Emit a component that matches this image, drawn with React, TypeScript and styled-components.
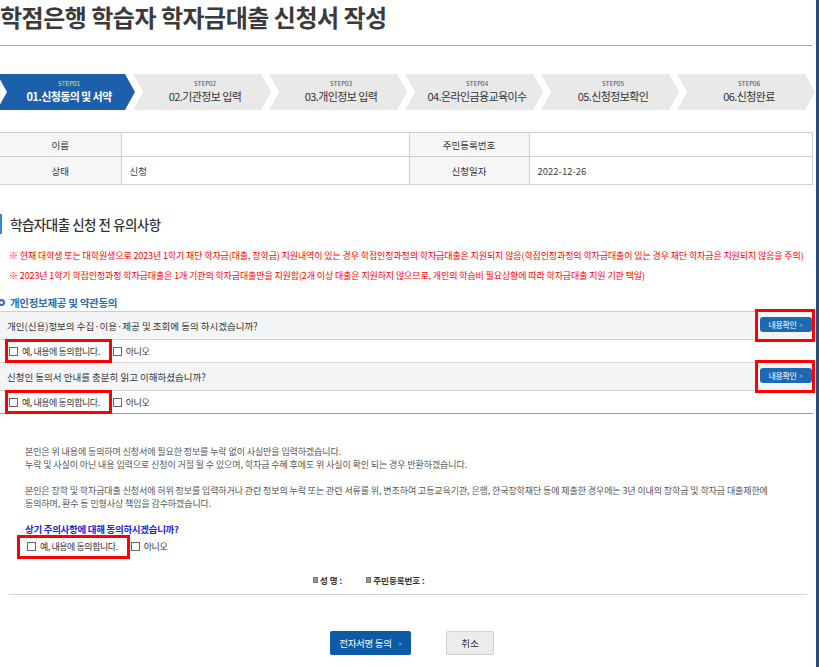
import React from 'react';
import styled, { createGlobalStyle } from 'styled-components';

const GlobalStyle = createGlobalStyle`
  html, body {
    margin: 0;
    padding: 0;
    background: #fff;
    overflow: hidden;
  }
  body {
    font-family: "Noto Sans CJK KR", "Noto Sans", sans-serif;
    color: #333;
  }
  * { box-sizing: border-box; }
`;

const steps = [
  { no: 'STEP01', label: '01.신청동의 및 서약' },
  { no: 'STEP02', label: '02.기관정보 입력' },
  { no: 'STEP03', label: '03.개인정보 입력' },
  { no: 'STEP04', label: '04.온라인금융교육이수' },
  { no: 'STEP05', label: '05.신청정보확인' },
  { no: 'STEP06', label: '06.신청완료' },
];

const CheckItem = ({ text }: { text: string }) => (
  <CheckLabel>
    <Box />
    <span>{text}</span>
  </CheckLabel>
);

export default function App() {
  return (
    <Page>
      <GlobalStyle />
      <Content>
        <Title>학점은행 학습자 학자금대출 신청서 작성</Title>
        <Divider />

        <Steps>
          {steps.map((s, i) => (
            <Step key={s.no} $active={i === 0}>
              <StepNo $active={i === 0}>{s.no}</StepNo>
              <StepLabel $active={i === 0}>{s.label}</StepLabel>
            </Step>
          ))}
        </Steps>

        <InfoTable>
          <tbody>
            <tr>
              <Th>이름</Th>
              <Td></Td>
              <Th>주민등록번호</Th>
              <Td></Td>
            </tr>
            <tr>
              <Th $tall>상태</Th>
              <Td $tall>신청</Td>
              <Th $tall>신청일자</Th>
              <Td $tall>2022-12-26</Td>
            </tr>
          </tbody>
        </InfoTable>

        <SectionTitle>학습자대출 신청 전 유의사항</SectionTitle>
        <Notice>
          ※ 현재 대학생 또는 대학원생으로 2023년 1학기 재단 학자금(대출, 장학금) 지원내역이 있는 경우 학점인정과정의 학자금대출은 지원되지 않음(학점인정과정의 학자금대출이 있는 경우 재단 학자금은 지원되지 않음을 주의)
        </Notice>
        <Notice>
          ※ 2023년 1학기 학점인정과정 학자금대출은 1개 기관의 학자금대출만을 지원함(2개 이상 대출은 지원하지 않으므로, 개인의 학습비 필요상황에 따라 학자금대출 지원 기관 택일)
        </Notice>

        <SubTitle>
          <Ring />
          개인정보제공 및 약관동의
        </SubTitle>

        <AgreeBlock>
          <QuestionRow>
            <span>개인(신용)정보의 수집·이용·제공 및 조회에 동의 하시겠습니까?</span>
            <ButtonMark>
              <DetailButton>
                내용확인 <Chevron>&gt;</Chevron>
              </DetailButton>
            </ButtonMark>
          </QuestionRow>
          <AnswerRow>
            <Mark>
              <CheckItem text="예, 내용에 동의합니다." />
            </Mark>
            <CheckItem text="아니오" />
          </AnswerRow>
          <QuestionRow>
            <span>신청인 동의서 안내를 충분히 읽고 이해하셨습니까?</span>
            <ButtonMark>
              <DetailButton>
                내용확인 <Chevron>&gt;</Chevron>
              </DetailButton>
            </ButtonMark>
          </QuestionRow>
          <AnswerRow $last>
            <Mark>
              <CheckItem text="예, 내용에 동의합니다." />
            </Mark>
            <CheckItem text="아니오" />
          </AnswerRow>
        </AgreeBlock>

        <Pledge>
          <p>
            본인은 위 내용에 동의하며 신청서에 필요한 정보를 누락 없이 사실만을 입력하겠습니다.
            <br />
            누락 및 사실이 아닌 내용 입력으로 신청이 거절 될 수 있으며, 학자금 수혜 후에도 위 사실이 확인 되는 경우 반환하겠습니다.
          </p>
          <p>
            본인은 장학 및 학자금대출 신청서에 허위 정보를 입력하거나 관련 정보의 누락 또는 관련 서류를 위, 변조하여 고등교육기관, 은행, 한국장학재단 등에 제출한 경우에는 3년 이내의 장학금 및 학자금 대출제한에
            <br />
            동의하며, 환수 등 민형사상 책임을 감수하겠습니다.
          </p>
          <Question>상기 주의사항에 대해 동의하시겠습니까?</Question>
          <FinalChecks>
            <Mark $inset={6}>
              <CheckItem text="예, 내용에 동의합니다." />
            </Mark>
            <CheckItem text="아니오" />
          </FinalChecks>
        </Pledge>

        <SignRow>
          <SignItem>
            <Bullet />성 명 :
          </SignItem>
          <SignItem>
            <Bullet />주민등록번호 :
          </SignItem>
        </SignRow>
        <Rule />

        <ButtonRow>
          <PrimaryButton>
            전자서명 동의 <Chevron>&gt;</Chevron>
          </PrimaryButton>
          <GrayButton>취소</GrayButton>
        </ButtonRow>
      </Content>
      <EdgeBar />
    </Page>
  );
}

const Page = styled.div`
  display: flex;
  width: 819px;
  height: 667px;
  overflow: hidden;
`;

const Content = styled.div`
  width: 816px;
  overflow: hidden;
`;

const EdgeBar = styled.div`
  width: 3px;
  background: #254b82;
`;

const Title = styled.h1`
  margin: 2px 0 0 0;
  font-size: 24px;
  line-height: 30px;
  font-weight: 700;
  letter-spacing: -0.5px;
  color: #3a3a3a;
  white-space: nowrap;
`;

const Divider = styled.div`
  width: 812px;
  height: 1px;
  margin-top: 13px;
  background: #a3a3ab;
`;

const Steps = styled.div`
  display: flex;
  margin: 28px 0 0 -3px;
  height: 36px;
`;

const Step = styled.div<{ $active?: boolean }>`
  flex: 0 0 138px;
  margin-right: -2px;
  height: 36px;
  background: ${p => (p.$active ? '#1c5fad' : '#e9e9e9')};
  clip-path: polygon(0 0, 128px 0, 138px 50%, 128px 100%, 0 100%, 10px 50%);
  display: flex;
  flex-direction: column;
  align-items: center;
  justify-content: center;
  padding-left: 6px;
`;

const StepNo = styled.span<{ $active?: boolean }>`
  font-family: "DejaVu Sans", sans-serif;
  font-size: 7px;
  line-height: 9px;
  color: ${p => (p.$active ? '#e4ef00' : '#555')};
  transform: scaleX(0.85);
`;

const StepLabel = styled.span<{ $active?: boolean }>`
  font-size: 11px;
  line-height: 15px;
  letter-spacing: -0.6px;
  font-weight: ${p => (p.$active ? 700 : 400)};
  color: ${p => (p.$active ? '#fff' : '#333')};
  white-space: nowrap;
`;

const InfoTable = styled.table`
  width: 813px;
  margin-top: 22px;
  border-collapse: collapse;
  border-top: 1px solid #3a3a3a;
  table-layout: fixed;
  font-size: 9.5px;
`;

const Th = styled.th<{ $tall?: boolean }>`
  height: ${p => (p.$tall ? 28 : 24)}px;
  background: #f6f6f6;
  border: 1px solid #cfcfcf;
  border-left: none;
  font-weight: 400;
  color: #333;
  text-align: center;
  padding: 0;
  &:first-child { width: 121px; }
  &:nth-child(3) { width: 120px; }
`;

const Td = styled.td<{ $tall?: boolean }>`
  height: ${p => (p.$tall ? 28 : 24)}px;
  border: 1px solid #cfcfcf;
  padding: 0 8px;
  color: #444;
  &:nth-child(2) { width: 288px; }
`;

const SectionTitle = styled.h2`
  margin: 29px 0 0 0;
  height: 20px;
  border-left: 2px solid #3b86d6;
  padding-left: 8px;
  font-size: 13.5px;
  line-height: 20px;
  font-weight: 500;
  letter-spacing: -0.5px;
  color: #333;
`;

const Notice = styled.p`
  margin: 0;
  padding-left: 9px;
  font-size: 9px;
  line-height: 20px;
  letter-spacing: -0.12px;
  color: #f00;
  white-space: nowrap;
  &:first-of-type { margin-top: 12px; }
`;

const SubTitle = styled.h3`
  display: flex;
  align-items: center;
  gap: 5px;
  margin: 8px 0 0 -2px;
  height: 16px;
  font-size: 10.5px;
  font-weight: 700;
  letter-spacing: -0.3px;
  color: #2b6cb3;
`;

const Ring = styled.span`
  width: 7px;
  height: 7px;
  border: 2px solid #2b6cb3;
  border-radius: 50%;
`;

const AgreeBlock = styled.div`
  width: 813px;
  margin-top: 1px;
  border-top: 1px solid #cdcdcd;
  border-bottom: 1px solid #999;
`;

const QuestionRow = styled.div`
  display: flex;
  align-items: center;
  justify-content: space-between;
  height: 28px;
  padding: 0 1px 0 7px;
  background: #f4f5f7;
  border-bottom: 1px solid #d6d6d6;
  font-size: 9.5px;
  color: #333;
`;

const AnswerRow = styled.div<{ $last?: boolean }>`
  display: flex;
  align-items: center;
  gap: 3px;
  height: ${p => (p.$last ? 22 : 23)}px;
  padding-left: 8px;
  border-bottom: ${p => (p.$last ? 'none' : '1px solid #d6d6d6')};
`;

const Mark = styled.span<{ $inset?: number }>`
  display: inline-flex;
  align-items: center;
  padding-left: ${p => p.$inset ?? 0}px;
  padding-right: 3px;
  outline: 3px solid #f00;
`;

const ButtonMark = styled.span`
  display: inline-flex;
  width: 54px;
  height: 27px;
  padding: 5px 0 7px 2px;
  outline: 3px solid #f00;
`;

const CheckLabel = styled.label`
  display: inline-flex;
  align-items: center;
  gap: 4px;
  height: 18px;
  padding: 0 6px 0 1px;
  font-size: 9px;
  letter-spacing: -0.45px;
  color: #333;
  white-space: nowrap;
`;

const Box = styled.span`
  width: 9px;
  height: 9px;
  border: 1px solid #666;
  background: #fff;
`;

const DetailButton = styled.span`
  display: inline-flex;
  align-items: center;
  justify-content: center;
  gap: 3px;
  flex: 1;
  background: #1b6bb4;
  border-radius: 3px;
  font-size: 8px;
  letter-spacing: -0.4px;
  color: #fff;
  white-space: nowrap;
`;

const Chevron = styled.span`
  color: #b9d3ee;
  font-size: 8px;
  transform: scaleX(0.7);
`;

const Pledge = styled.div`
  padding: 31px 0 0 25px;
  font-size: 9px;
  line-height: 13px;
  letter-spacing: -0.1px;
  color: #555;
  p {
    margin: 0 0 13px 0;
    white-space: nowrap;
  }
`;

const Question = styled.div`
  margin-top: 10px;
  font-weight: 700;
  font-size: 9.5px;
  letter-spacing: -0.3px;
  color: #2323d8;
`;

const FinalChecks = styled.div`
  display: flex;
  align-items: center;
  gap: 3px;
  margin: 0 0 0 -5px;
  height: 21px;
`;

const SignRow = styled.div`
  display: flex;
  gap: 24px;
  margin-top: 16px;
  padding-left: 313px;
  height: 14px;
  align-items: center;
`;

const SignItem = styled.span`
  display: inline-flex;
  align-items: center;
  gap: 2px;
  font-size: 8.5px;
  font-weight: 700;
  color: #333;
`;

const Bullet = styled.span`
  width: 5px;
  height: 6px;
  background: #999;
  border: 1px solid #777;
`;

const Rule = styled.div`
  width: 798px;
  height: 1px;
  margin: 7px 0 0 9px;
  background: #d2d2d2;
`;

const ButtonRow = styled.div`
  display: flex;
  justify-content: center;
  gap: 35px;
  margin-top: 36px;
  padding-left: 8px;
`;

const PrimaryButton = styled.button`
  display: inline-flex;
  align-items: center;
  justify-content: center;
  gap: 6px;
  width: 81px;
  height: 24px;
  padding: 0;
  border: none;
  border-radius: 2px;
  background: #0b5ba6;
  color: #fff;
  font-family: inherit;
  font-size: 9.5px;
  letter-spacing: -0.3px;
  white-space: nowrap;
`;

const GrayButton = styled.button`
  width: 48px;
  height: 24px;
  padding: 0;
  border: 1px solid #cfcfcf;
  border-radius: 2px;
  background: #ececec;
  color: #333;
  font-family: inherit;
  font-size: 9.5px;
`;
